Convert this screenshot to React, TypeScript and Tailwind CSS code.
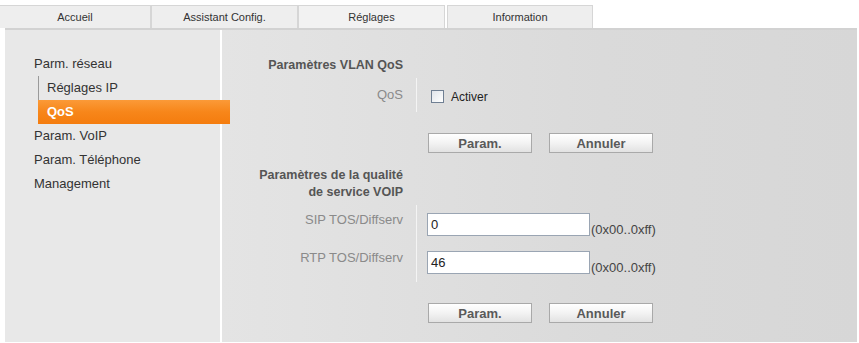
import React from "react";

const tabs = ["Accueil", "Assistant Config.", "Réglages", "Information"];

function Btn({ label }: { label: string }) {
  return (
    <button className="h-[20px] w-[104px] border border-[#a9a9a9] bg-[linear-gradient(#ffffff,#f3f3f3_50%,#e2e2e2)] text-[13px] font-bold leading-none text-[#5a5a5a]">
      {label}
    </button>
  );
}

function Field({ value }: { value: string }) {
  return (
    <div className="flex items-end gap-[1px]">
      <div className="flex h-[23px] w-[163px] items-center border border-[#9aa5b3] bg-white pl-[3px] text-[13px] text-[#222]">
        {value}
      </div>
      <span className="mb-[-3px] text-[13px] text-[#444]">(0x00..0xff)</span>
    </div>
  );
}

export default function App() {
  return (
    <div className="h-[343px] w-[859px] overflow-hidden bg-white font-['Liberation_Sans',Arial,sans-serif]">
      {/* Tabs */}
      <div className="flex pt-[5px]">
        {tabs.map((t, i) => (
          <div
            key={t}
            className={
              "flex h-[23px] items-center justify-center border-t border-r border-[#d6d6d6] text-[11px] text-[#333] " +
              (i === 0
                ? "w-[151px] bg-[#eeeeee]"
                : i === 1
                ? "w-[147px] border-l bg-[#eeeeee]"
                : i === 2
                ? "w-[147px] border-l bg-[#f2f2f2]"
                : "ml-[2px] w-[146px] border-l bg-[#eeeeee]")
            }
          >
            {t}
          </div>
        ))}
      </div>

      {/* Main */}
      <div className="ml-[5px] flex h-[314px] w-[852px] border-t-2 border-[#d2d2d2]">
        {/* Sidebar */}
        <div className="w-[215px] shrink-0 bg-[#e8e8e8] pt-[22px] text-[13px] text-[#333]">
          <div className="flex h-[24px] items-center pl-[29px]">Parm. réseau</div>
          <div className="ml-[33px] border-l border-[#9a9a9a]">
            <div className="flex h-[24px] items-center pl-[8px]">Réglages IP</div>
            <div className="relative -ml-[1px] flex h-[24px] w-[192px] items-center bg-[linear-gradient(#fb9a38,#f7861a_50%,#f47c0e)] pl-[9px] font-bold text-white">
              QoS
            </div>
          </div>
          <div className="flex h-[24px] items-center pl-[29px]">Param. VoIP</div>
          <div className="flex h-[24px] items-center pl-[29px]">Param. Téléphone</div>
          <div className="flex h-[24px] items-center pl-[29px]">Management</div>
        </div>
        <div className="w-[2px] shrink-0 bg-white" />

        {/* Content */}
        <div className="flex-1 bg-[linear-gradient(90deg,#e4e4e4,#dadada_60%,#d7d7d7)] pt-[27px] text-[13px]">
          {/* VLAN QoS */}
          <div className="flex">
            <div className="w-[181px] text-right text-[12.5px] font-bold leading-[16px] text-[#555]">Paramètres VLAN QoS</div>
          </div>
          <div className="mt-[5px] flex h-[34px]">
            <div className="flex w-[181px] items-center justify-end text-[#8a8a8a]">QoS</div>
            <div className="ml-[13px] w-[1px] bg-[#f4f4f4]" />
            <div className="ml-[14px] flex items-center gap-[7px] pt-[3px]">
              <span className="h-[13px] w-[13px] border border-[#6f7f93] bg-[linear-gradient(135deg,#dfe4ea,#ffffff)]" />
              <span className="text-[12px] text-[#222]">Activer</span>
            </div>
          </div>
          <div className="mt-[21px] flex gap-[17px] pl-[206px]">
            <Btn label="Param." />
            <Btn label="Annuler" />
          </div>

          {/* VOIP */}
          <div className="mt-[14px] flex">
            <div className="w-[181px] text-right text-[12.5px] font-bold leading-[17px] text-[#555]">
              Paramètres de la qualité
              <br />
              de service VOIP
            </div>
          </div>
          <div className="mt-[4px] flex">
            <div className="flex w-[181px] flex-col items-end pt-[7px] text-[#8a8a8a]">
              <div className="leading-[16px]">SIP TOS/Diffserv</div>
              <div className="mt-[22px] leading-[16px]">RTP TOS/Diffserv</div>
            </div>
            <div className="ml-[13px] h-[77px] w-[1px] bg-[#f4f4f4]" />
            <div className="ml-[10px] flex flex-col gap-[15px] pt-[8px]">
              <Field value="0" />
              <Field value="46" />
            </div>
          </div>
          <div className="mt-[21px] flex gap-[17px] pl-[206px]">
            <Btn label="Param." />
            <Btn label="Annuler" />
          </div>
        </div>
      </div>
    </div>
  );
}
